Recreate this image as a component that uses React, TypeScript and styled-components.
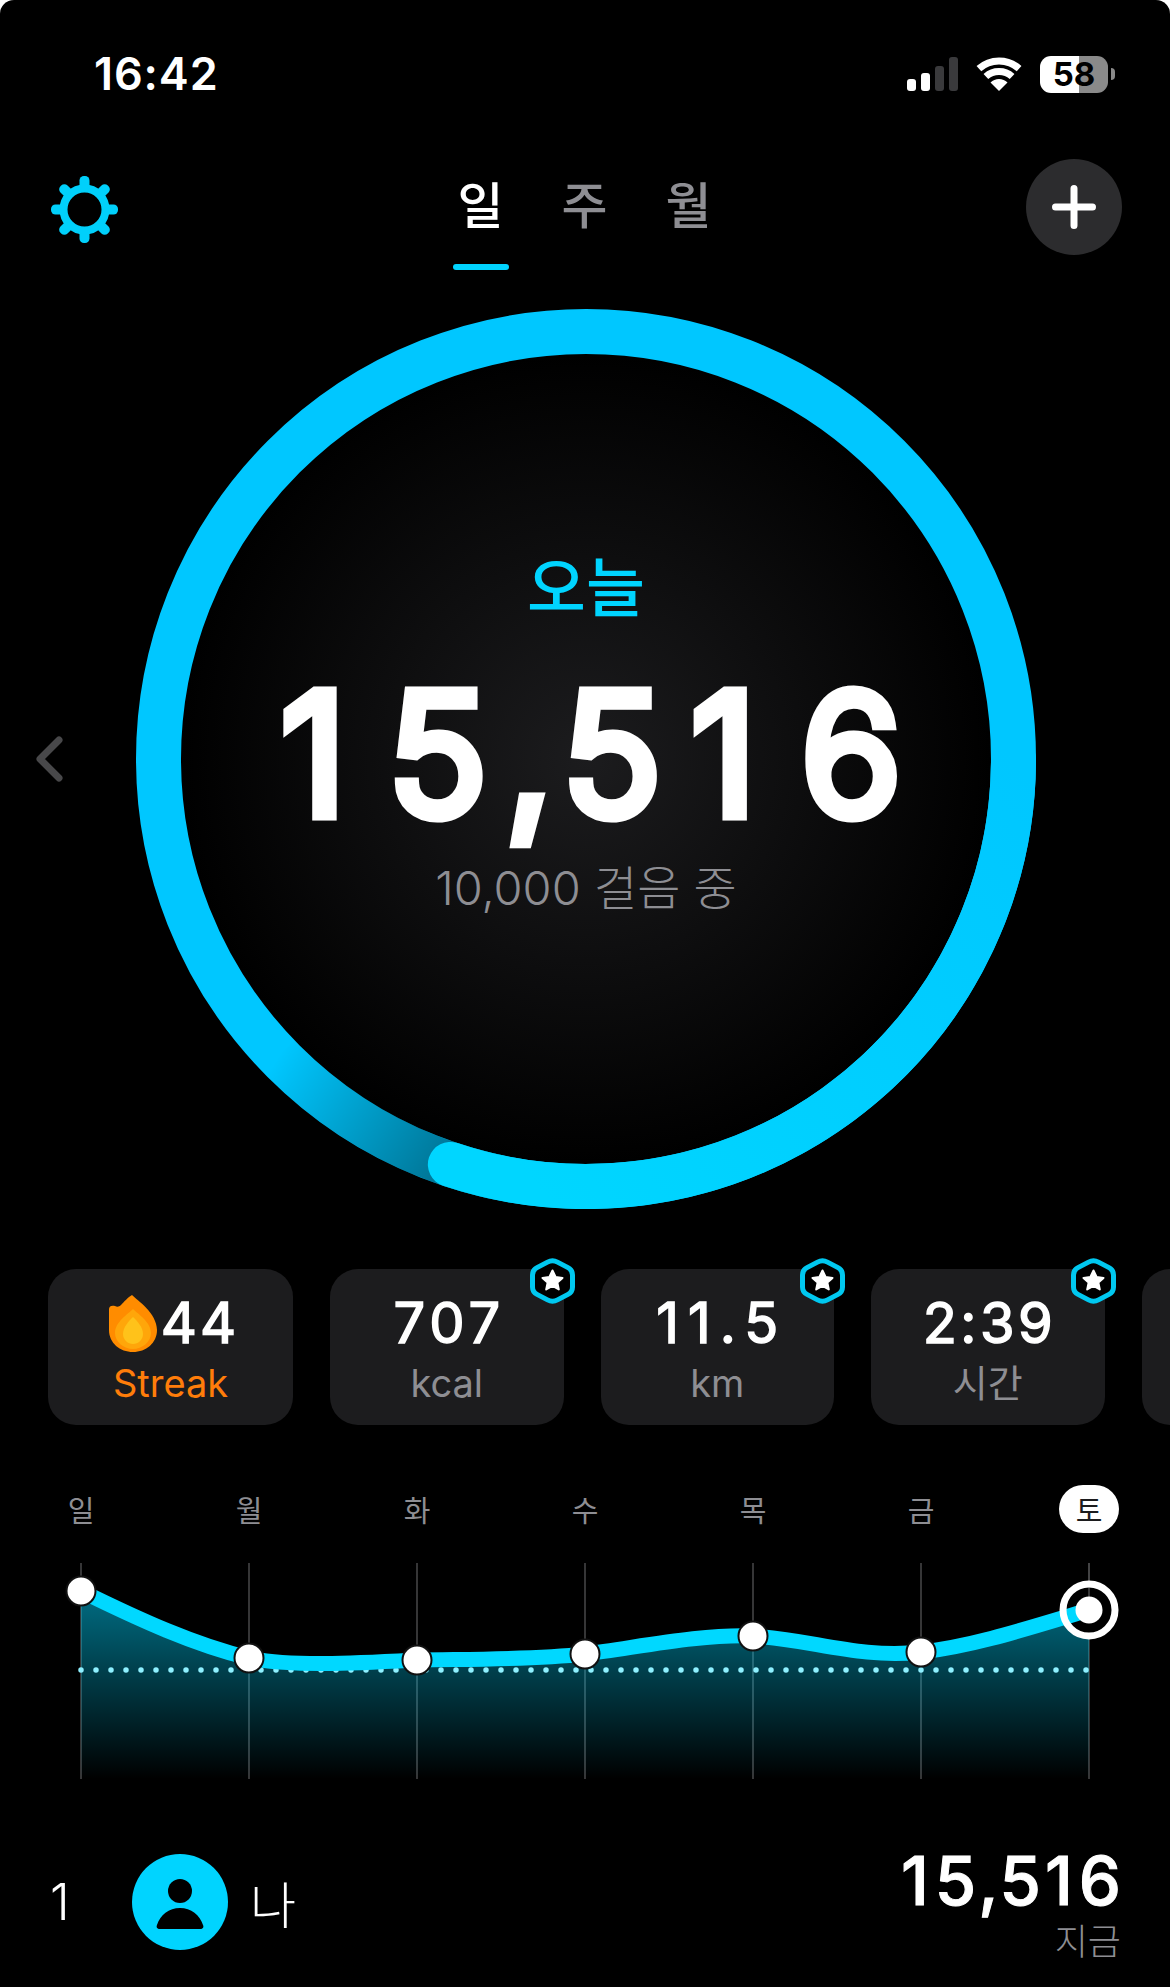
import React from 'react';
import styled, { createGlobalStyle } from 'styled-components';

const CYAN = '#00d4ff';
const GRAY = '#8e8e93';
const FONT = `Inter, "Noto Sans CJK KR", sans-serif`;

const GlobalStyle = createGlobalStyle`
  html, body {
    margin: 0;
    padding: 0;
    background: #fff;
  }
  * {
    box-sizing: border-box;
  }
`;

const Frame = styled.div`
  width: 1170px;
  height: 1987px;
  background: #000;
  border-radius: 14px 14px 0 0;
  overflow: hidden;
  font-family: ${FONT};
  color: #fff;
`;

const StatusBar = styled.div`
  height: 148px;
  padding: 0 55px 0 94px;
  display: flex;
  align-items: center;
  justify-content: space-between;
`;

const Time = styled.div`
  font-size: 45px;
  font-weight: 600;
  letter-spacing: 0.9px;
  line-height: 46px;
`;

const StatusIcons = styled.div`
  display: flex;
  align-items: center;
  gap: 17px;
`;

const Signal = styled.div`
  display: flex;
  align-items: flex-end;
  gap: 5px;
  height: 34px;
`;

const SignalBar = styled.div<{ $h: number; $on: boolean }>`
  width: 9px;
  height: ${(p) => p.$h}px;
  border-radius: 3px;
  background: ${(p) => (p.$on ? '#fff' : '#3a3a3c')};
`;

const BatteryRow = styled.div`
  display: flex;
  align-items: center;
  gap: 3px;
`;

const Battery = styled.div`
  width: 68px;
  height: 37px;
  border-radius: 11px;
  background: linear-gradient(90deg, #fff 0, #fff 58%, #8a8a8a 58%, #8a8a8a 100%);
  color: #000;
  font-size: 33px;
  font-weight: 700;
  line-height: 37px;
  text-align: center;
`;

const BatteryCap = styled.div`
  width: 4px;
  height: 12px;
  border-radius: 0 4px 4px 0;
  background: #8a8a8a;
`;

const Header = styled.div`
  height: 161px;
  padding: 0 48px 0 47px;
  display: grid;
  grid-template-columns: 1fr auto 1fr;
  align-items: start;
`;

const GearWrap = styled.div`
  margin: 28px 0 0 4px;
  width: 67px;
  height: 67px;
`;

const Tabs = styled.div`
  display: flex;
  margin-top: 30px;
`;

const Tab = styled.div<{ $active?: boolean }>`
  width: 104px;
  display: flex;
  flex-direction: column;
  align-items: center;
  gap: 30px;
  font-size: 50px;
  font-weight: 500;
  line-height: 56px;
  color: ${(p) => (p.$active ? '#fff' : GRAY)};
  &::after {
    content: '';
    width: 56px;
    height: 6px;
    border-radius: 3px;
    background: ${(p) => (p.$active ? CYAN : 'transparent')};
  }
`;

const PlusButton = styled.div`
  margin-top: 11px;
  justify-self: end;
  width: 96px;
  height: 96px;
  border-radius: 50%;
  background: #2c2c2e;
  display: flex;
  align-items: center;
  justify-content: center;
`;

const Hero = styled.div`
  display: grid;
  grid-template-columns: 136px 900px;
  align-items: center;
`;

const BackChevron = styled.div`
  padding-left: 35px;
  display: flex;
`;

const RingWrap = styled.div`
  position: relative;
  width: 900px;
  height: 900px;
  display: flex;
  flex-direction: column;
  align-items: center;
`;

const RingSvg = styled.svg`
  position: absolute;
  inset: 0;
`;

const TodayLabel = styled.div`
  position: relative;
  margin-top: 243px;
  font-size: 64px;
  font-weight: 500;
  line-height: 72px;
  color: ${CYAN};
`;

const Glyph = styled.span<{ $gap: number }>`
  letter-spacing: ${(p) => p.$gap}px;
`;

const BigNumber = styled.div`
  position: relative;
  margin-top: 30px;
  padding-left: 10px;
  font-size: 166px;
  font-weight: 300;
  line-height: 200px;
  -webkit-text-stroke: 13px #fff;
  stroke-linejoin: round;
`;

const GoalText = styled.div`
  position: relative;
  margin-top: 6px;
  font-size: 47px;
  font-weight: 300;
  line-height: 56px;
  color: ${GRAY};
`;

const Cards = styled.div`
  margin-top: 48px;
  padding: 12px 0 0 48px;
  display: flex;
  gap: 37px;
  overflow: hidden;
`;

const Card = styled.div<{ $wide?: boolean }>`
  position: relative;
  flex: none;
  width: ${(p) => (p.$wide ? 245 : 233.5)}px;
  height: 156px;
  border-radius: 28px;
  background: #1c1c1e;
  display: flex;
  flex-direction: column;
  align-items: center;
  padding-top: 23px;
`;

const CardValue = styled.div<{ $spacing: number; $shift?: boolean }>`
  display: flex;
  align-items: center;
  gap: 4px;
  height: 62px;
  margin-left: ${(p) => (p.$shift ? 4 : 0)}px;
  padding-left: ${(p) => p.$spacing}px;
  font-size: 56px;
  font-weight: 400;
  letter-spacing: ${(p) => p.$spacing}px;
  line-height: 62px;
  -webkit-text-stroke: 1.5px #fff;
  stroke-linejoin: round;
`;

const CardLabel = styled.div<{ $accent?: boolean }>`
  margin-top: 6px;
  font-size: 38px;
  font-weight: 400;
  line-height: 46px;
  color: ${(p) => (p.$accent ? '#ff7d0a' : GRAY)};
`;

const Badge = styled.svg`
  position: absolute;
  top: -12px;
  right: -11px;
`;

const Days = styled.div`
  margin-top: 60px;
  padding: 0 51px;
  height: 48px;
  display: grid;
  grid-template-columns: repeat(7, 60px);
  justify-content: space-between;
  align-items: center;
`;

const Day = styled.div<{ $today?: boolean }>`
  height: 48px;
  border-radius: 24px;
  display: flex;
  align-items: center;
  justify-content: center;
  font-size: 29px;
  font-weight: 400;
  color: ${(p) => (p.$today ? '#1c1c1e' : GRAY)};
  background: ${(p) => (p.$today ? '#fff' : 'transparent')};
`;

const ChartSvg = styled.svg`
  display: block;
  margin-top: 17px;
`;

const Leader = styled.div`
  padding: 51px 49px 0 50px;
  display: flex;
  align-items: center;
`;

const Rank = styled.div`
  width: 82px;
  font-size: 50px;
  font-weight: 300;
`;

const Avatar = styled.div`
  width: 96px;
  height: 96px;
  padding-top: 4px;
  border-radius: 50%;
  background: ${CYAN};
  display: flex;
  align-items: center;
  justify-content: center;
`;

const LeaderName = styled.div`
  margin-left: 22px;
  font-size: 50px;
  font-weight: 300;
  flex: 1;
`;

const LeaderScore = styled.div`
  display: flex;
  flex-direction: column;
  align-items: flex-end;
`;

const ScoreValue = styled.div`
  font-size: 67px;
  font-weight: 500;
  line-height: 80px;
  -webkit-text-stroke: 1px #fff;
  stroke-linejoin: round;
`;

const ScoreTime = styled.div`
  font-size: 36px;
  font-weight: 300;
  line-height: 42px;
  color: ${GRAY};
`;

const RING_R = 427.5;
const HEAD_DEG = 18.5;
const SHADOW_END_DEG = 46;

// angle measured from the bottom of the ring, growing clockwise (towards the left)
const ringPoint = (deg: number) => {
  const a = (deg * Math.PI) / 180;
  return {
    x: 450 - RING_R * Math.sin(a),
    y: 450 + RING_R * Math.cos(a),
  };
};

const arc = (from: number, to: number) => {
  const a = ringPoint(from);
  const b = ringPoint(to);
  return `M${a.x} ${a.y} A${RING_R} ${RING_R} 0 0 ${to > from ? 1 : 0} ${b.x} ${b.y}`;
};

const shadowFrom = ringPoint(HEAD_DEG);
const shadowTo = ringPoint(SHADOW_END_DEG);

const Ring = () => (
  <RingSvg width="900" height="900" viewBox="0 0 900 900">
    <defs>
      <radialGradient id="disc" cx="50%" cy="50%" r="50%">
        <stop offset="0%" stopColor="#1c1c1e" />
        <stop offset="100%" stopColor="#000" />
      </radialGradient>
      <linearGradient id="head" gradientUnits="userSpaceOnUse" x1="400" y1="877" x2="877" y2="450">
        <stop offset="0%" stopColor="#00d6ff" />
        <stop offset="100%" stopColor="#00c7ff" />
      </linearGradient>
      <linearGradient
        id="shade"
        gradientUnits="userSpaceOnUse"
        x1={shadowFrom.x}
        y1={shadowFrom.y}
        x2={shadowTo.x}
        y2={shadowTo.y}
      >
        <stop offset="0%" stopColor="#000" stopOpacity="0.42" />
        <stop offset="100%" stopColor="#000" stopOpacity="0" />
      </linearGradient>
    </defs>
    <circle cx="450" cy="450" r="405" fill="url(#disc)" />
    <circle cx="450" cy="450" r={RING_R} fill="none" stroke="#00c7ff" strokeWidth="45" />
    <path d={arc(12, SHADOW_END_DEG)} fill="none" stroke="url(#shade)" strokeWidth="45" />
    <path d={arc(HEAD_DEG, -90)} fill="none" stroke="url(#head)" strokeWidth="45" strokeLinecap="round" />
  </RingSvg>
);

const Gear = () => (
  <svg width="67" height="67" viewBox="-33.5 -33.5 67 67">
    <circle r="21" fill="none" stroke="#00d0fb" strokeWidth="8" />
    {[0, 45, 90, 135, 180, 225, 270, 315].map((deg) => (
      <rect key={deg} x="-5" y="-33.5" width="10" height="13" rx="4.5" fill="#00d0fb" transform={`rotate(${deg})`} />
    ))}
  </svg>
);

const Wifi = () => (
  <svg width="48" height="34" viewBox="0 0 48 34" fill="none">
    <path d="M3.9 11.7A30 30 0 0 1 44.1 11.7" stroke="#fff" strokeWidth="7" />
    <path d="M10.9 19.5A19.5 19.5 0 0 1 37.1 19.5" stroke="#fff" strokeWidth="7" />
    <path d="M24 34L15.5 25.5A12 12 0 0 1 32.5 25.5Z" fill="#fff" />
  </svg>
);

const Plus = () => (
  <svg width="44" height="44" viewBox="0 0 44 44">
    <path d="M22 3.5V40.5M3.5 22H40.5" stroke="#fff" strokeWidth="7" strokeLinecap="round" />
  </svg>
);

const Chevron = () => (
  <svg width="28" height="46" viewBox="0 0 28 46" fill="none">
    <path d="M24 4L5 23L24 42" stroke="#48484a" strokeWidth="7" strokeLinecap="round" strokeLinejoin="round" />
  </svg>
);

const Flame = () => (
  <svg width="48" height="57" viewBox="0 0 48 57">
    <path
      d="M23 0C28 5 48 18 48 35C48 48 37 57 24 57C11 57 0 48 0 35L0 14C0 11 3 10 6 11C8 12 10 12 12 10C15 7 19 2 23 0Z"
      fill="#ff8c00"
    />
    <path d="M24 14C29 19 42 27 42 38C42 47 33 54 24 54C15 54 6 47 6 38C6 27 19 19 24 14Z" fill="#ffa60a" />
    <path d="M24 22C28 26 34 32 34 39C34 45 29 49 24 49C19 49 14 45 14 39C14 32 20 26 24 22Z" fill="#ffc21a" />
  </svg>
);

const StarBadge = () => (
  <Badge width="45" height="48" viewBox="0 0 45 48">
    <path
      d="M17.5 5.1Q22.5 2.5 27.5 5.1L38 10.6Q42.5 13 42.5 18V30Q42.5 35 38 37.4L27.5 42.9Q22.5 45.5 17.5 42.9L7 37.4Q2.5 35 2.5 30V18Q2.5 13 7 10.6Z"
      fill="#000"
      stroke="#00c8f0"
      strokeWidth="5"
    />
    <path
      d="M22.5 13.5L25.6 20L32.5 20.9L27.4 25.6L28.8 32.5L22.5 29L16.2 32.5L17.6 25.6L12.5 20.9L19.4 20Z"
      fill="#fff"
      stroke="#fff"
      strokeWidth="2"
      strokeLinejoin="round"
    />
  </Badge>
);

const Person = () => (
  <svg width="48" height="50" viewBox="0 0 48 50">
    <circle cx="24" cy="12" r="12" fill="#000" />
    <path d="M4 50C1 50 0 48 1 46C4 36 13 29 24 29C35 29 44 36 47 46C48 48 47 50 44 50Z" fill="#000" />
  </svg>
);

// the reference numerals are evenly pitched, so each glyph carries its own spacing
const Spaced = ({ text, gaps }: { text: string; gaps: number[] }) => (
  <>
    {text.split('').map((ch, i) => (
      <Glyph key={i} $gap={gaps[i]}>
        {ch}
      </Glyph>
    ))}
  </>
);

const stats = [
  { value: '707', label: 'kcal', spacing: 5 },
  { value: '11.5', label: 'km', spacing: 9 },
  { value: '2:39', label: '시간', spacing: 3.5 },
];

const days = ['일', '월', '화', '수', '목', '금', '토'];

const points = [
  { x: 81, y: 1591 },
  { x: 249, y: 1658 },
  { x: 417, y: 1660 },
  { x: 585, y: 1654 },
  { x: 753, y: 1636 },
  { x: 921, y: 1652 },
];

const LINE =
  'M81 1591C140 1620 195 1645 249 1658C290 1667 360 1663 417 1660C470 1659 530 1660 585 1654C640 1647 700 1634 753 1636C810 1639 860 1659 921 1652C975 1646 1035 1626 1089 1610';

const Chart = () => (
  <ChartSvg width="1170" height="240" viewBox="0 1550 1170 240">
    <defs>
      <linearGradient id="area" x1="0" y1="0" x2="0" y2="1">
        <stop offset="0%" stopColor="#00d4ff" stopOpacity="0.52" />
        <stop offset="100%" stopColor="#00d4ff" stopOpacity="0" />
      </linearGradient>
    </defs>
    {days.map((d, i) => (
      <line key={d} x1={81 + i * 168} x2={81 + i * 168} y1="1563" y2="1779" stroke="#48484a" strokeWidth="1.5" />
    ))}
    <path d={`${LINE}L1089 1779L81 1779Z`} fill="url(#area)" />
    <line x1="81" x2="1089" y1="1670" y2="1670" stroke="#8ef0ff" strokeWidth="5.5" strokeLinecap="round" strokeDasharray="0 15" />
    <circle cx="1089" cy="1610" r="26" fill="#000" />
    <line x1="1089" x2="1089" y1="1563" y2="1600" stroke="#48484a" strokeWidth="1.5" />
    <path d={LINE} fill="none" stroke="#00d8ff" strokeWidth="15" />
    <circle cx="1089" cy="1610" r="26" fill="none" stroke="#fff" strokeWidth="7" />
    {points.map((p) => (
      <circle key={p.x} cx={p.x} cy={p.y} r="14.5" fill="#fff" stroke="#111" strokeWidth="2" />
    ))}
    <circle cx="1089" cy="1610" r="13.5" fill="#fff" />
  </ChartSvg>
);

export default function App() {
  return (
    <Frame>
      <GlobalStyle />
      <StatusBar>
        <Time>16:42</Time>
        <StatusIcons>
          <Signal>
            <SignalBar $h={12} $on />
            <SignalBar $h={18} $on />
            <SignalBar $h={25} $on={false} />
            <SignalBar $h={34} $on={false} />
          </Signal>
          <Wifi />
          <BatteryRow>
            <Battery>58</Battery>
            <BatteryCap />
          </BatteryRow>
        </StatusIcons>
      </StatusBar>

      <Header>
        <GearWrap>
          <Gear />
        </GearWrap>
        <Tabs>
          <Tab $active>일</Tab>
          <Tab>주</Tab>
          <Tab>월</Tab>
        </Tabs>
        <PlusButton>
          <Plus />
        </PlusButton>
      </Header>

      <Hero>
        <BackChevron>
          <Chevron />
        </BackChevron>
        <RingWrap>
          <Ring />
          <TodayLabel>오늘</TodayLabel>
          <BigNumber>
            <Spaced text="15,516" gaps={[42, 19, 10, 30, 45, 0]} />
          </BigNumber>
          <GoalText>10,000 걸음 중</GoalText>
        </RingWrap>
      </Hero>

      <Cards>
        <Card $wide>
          <CardValue $spacing={3} $shift>
            <Flame />
            44
          </CardValue>
          <CardLabel $accent>Streak</CardLabel>
        </Card>
        {stats.map((s) => (
          <Card key={s.label}>
            <CardValue $spacing={s.spacing}>{s.value}</CardValue>
            <CardLabel>{s.label}</CardLabel>
            <StarBadge />
          </Card>
        ))}
        <Card />
      </Cards>

      <Days>
        {days.map((d) => (
          <Day key={d} $today={d === '토'}>
            {d}
          </Day>
        ))}
      </Days>

      <Chart />

      <Leader>
        <Rank>1</Rank>
        <Avatar>
          <Person />
        </Avatar>
        <LeaderName>나</LeaderName>
        <LeaderScore>
          <ScoreValue>
            <Spaced text="15,516" gaps={[6, 2, 1, 4, 6, 0]} />
          </ScoreValue>
          <ScoreTime>지금</ScoreTime>
        </LeaderScore>
      </Leader>
    </Frame>
  );
}
